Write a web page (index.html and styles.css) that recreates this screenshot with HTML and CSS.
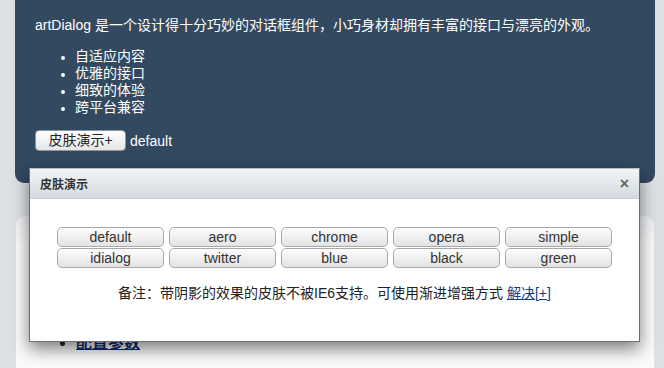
FILE: index.html
```html
<!DOCTYPE html>
<html lang="zh-CN">
<head>
<meta charset="utf-8">
<title>artDialog</title>
<link rel="stylesheet" href="styles.css">
</head>
<body>
<div class="page">
  <div class="hero">
    <p class="intro">artDialog 是一个设计得十分巧妙的对话框组件，小巧身材却拥有丰富的接口与漂亮的外观。</p>
    <ul class="features">
      <li>自适应内容</li>
      <li>优雅的接口</li>
      <li>细致的体验</li>
      <li>跨平台兼容</li>
    </ul>
    <div class="demo-row">
      <button class="demo-btn" type="button">皮肤演示+</button>
      <span class="skin-name">default</span>
    </div>
  </div>
  <div class="content">
    <ul class="doc-list">
      <li><a href="#">快速上手</a></li>
      <li><a href="#">配置参数</a></li>
    </ul>
  </div>
</div>

<div class="dialog">
  <div class="dialog-title">
    <span class="dialog-title-text">皮肤演示</span>
    <span class="dialog-close">×</span>
  </div>
  <div class="dialog-body">
    <div class="skins">
      <button class="skin" type="button">default</button>
      <button class="skin" type="button">aero</button>
      <button class="skin" type="button">chrome</button>
      <button class="skin" type="button">opera</button>
      <button class="skin" type="button">simple</button>
      <button class="skin" type="button">idialog</button>
      <button class="skin" type="button">twitter</button>
      <button class="skin" type="button">blue</button>
      <button class="skin" type="button">black</button>
      <button class="skin" type="button">green</button>
    </div>
    <p class="note">备注：带阴影的效果的皮肤不被IE6支持。可使用渐进增强方式 <a href="#">解决[+]</a></p>
  </div>
</div>
</body>
</html>
```
FILE: styles.css
```css
html, body {
  margin: 0;
  padding: 0;
}
body {
  background: #dde1e6;
  font-family: "Liberation Sans", "Noto Sans CJK SC", sans-serif;
  font-size: 14px;
  color: #222;
  width: 664px;
  height: 368px;
  overflow: hidden;
  position: relative;
}
.page {
  padding-left: 15px;
  width: 640px;
}
.hero {
  background: #33495f;
  color: #fff;
  border-radius: 0 0 9px 9px;
  padding: 17px 20px 32px 20px;
}
.intro {
  margin: 0;
  line-height: 17px;
}
.features {
  margin: 14px 0 0 0;
  padding-left: 40px;
  line-height: 17px;
}
.features li::marker {
  font-size: 12px;
}
.demo-row {
  margin-top: 14px;
  display: flex;
  align-items: center;
  gap: 4px;
  height: 21px;
}
.demo-btn {
  width: 91px;
  height: 21px;
  padding: 0;
  font-family: "Liberation Sans", "Noto Sans CJK SC", sans-serif;
  font-size: 14px;
  color: #222;
  border: 1px solid #8a96a3;
  border-radius: 4px;
  background: linear-gradient(#ffffff, #e6e6e6);
  line-height: 19px;
}
.skin-name {
  color: #fff;
}
.content {
  margin-top: 33px;
  margin-left: 1px;
  width: 638px;
  height: 153px;
  background: linear-gradient(#eef0f2, #fbfbfc 30px);
  border-radius: 9px 9px 0 0;
}
.doc-list {
  margin: 0;
  padding: 100px 0 0 60px;
  line-height: 18px;
  font-size: 16px;
}
.doc-list a {
  color: #0b2a6f;
  font-weight: bold;
}

.dialog {
  position: absolute;
  left: 29px;
  top: 168px;
  width: 609px;
  height: 172px;
  background: #fff;
  border: 1px solid #6b6f73;
  border-top-color: #b8bec4;
  box-shadow: 0 7px 16px rgba(0, 0, 0, 0.5);
}
.dialog-title {
  height: 29px;
  background: linear-gradient(#f3f5f7, #d3dadf);
  border-bottom: 1px solid #c9d0d6;
  display: flex;
  align-items: center;
  justify-content: space-between;
  padding: 0 10px 0 10px;
}
.dialog-title-text {
  font-size: 12px;
  font-weight: bold;
  color: #333;
}
.dialog-close {
  font-size: 16px;
  font-weight: bold;
  color: #666;
  line-height: 16px;
}
.dialog-body {
  padding-top: 28px;
}
.skins {
  display: grid;
  grid-template-columns: repeat(5, 107px);
  column-gap: 5px;
  row-gap: 1px;
  justify-content: center;
}
.skin {
  height: 20px;
  padding: 0;
  font-family: "Liberation Sans", sans-serif;
  font-size: 14px;
  color: #333;
  border: 1px solid #a9a9a9;
  border-radius: 5px;
  background: linear-gradient(#fdfdfd, #e3e3e3);
  line-height: 18px;
}
.note {
  margin: 16px 0 0 0;
  text-align: center;
  line-height: 18px;
  color: #222;
}
.note a {
  color: #0f3d8c;
}
```
